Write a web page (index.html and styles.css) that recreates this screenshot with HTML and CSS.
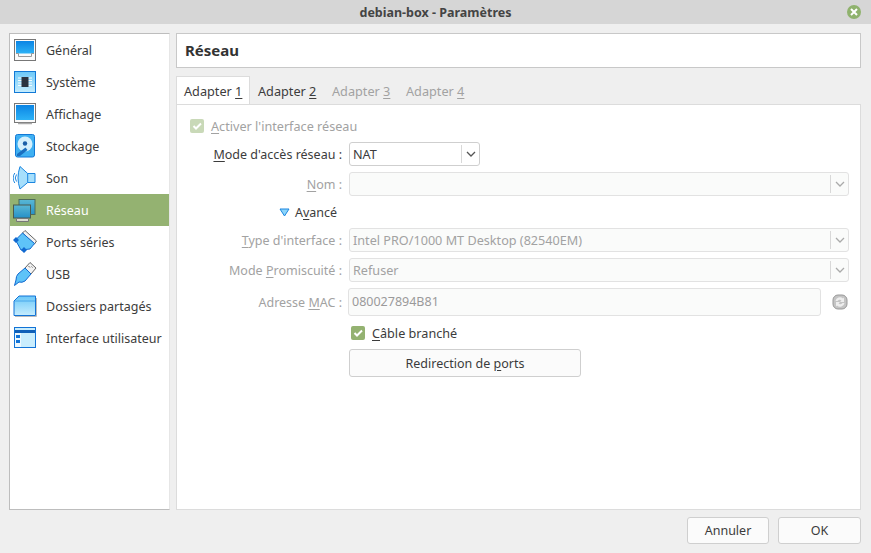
FILE: index.html
```html
<!DOCTYPE html>
<html lang="fr">
<head>
  <meta charset="UTF-8">
  <meta name="viewport" content="width=device-width, initial-scale=1.0">
  <title>debian-box - Paramètres</title>
  <link rel="stylesheet" href="styles.css">
</head>
<body>

  <!-- shared gradients for the sidebar icons -->
  <svg class="defs" width="0" height="0">
    <defs>
      <linearGradient id="screen" x1="0" y1="0" x2="0" y2="1"><stop offset="0" stop-color="#0a84e4"/><stop offset="1" stop-color="#2cb2f6"/></linearGradient>
      <linearGradient id="pale" x1="0" y1="0" x2="0" y2="1"><stop offset="0" stop-color="#6cc8f8"/><stop offset="1" stop-color="#c6edfe"/></linearGradient>
      <linearGradient id="teal" x1="0" y1="0" x2="0" y2="1"><stop offset="0" stop-color="#5ab8d4"/><stop offset="1" stop-color="#2590c8"/></linearGradient>
    </defs>
  </svg>

  <header class="titlebar">
    <span class="title">debian-box - Paramètres</span>
    <span class="close">
      <svg width="10" height="10" viewBox="0 0 10 10"><path d="M2 2l6 6M8 2l-6 6" stroke="#fff" stroke-width="2" fill="none"/></svg>
    </span>
  </header>

  <div class="main">
    <ul class="sidebar">
      <li class="item">
        <svg class="icon" viewBox="0 0 24 24"><rect x="1.500" y="1.500" width="21" height="21" fill="#fafafa" stroke="#777"/><rect x="3" y="3" width="18" height="12.500" fill="url(#screen)"/><path d="M3 15.500h2.500v3h13v-3H21" fill="none" stroke="#999"/></svg>
        <span>Général</span>
      </li>
      <li class="item">
        <svg class="icon" viewBox="0 0 24 24"><rect x="1.500" y="1.500" width="21" height="21" fill="url(#pale)" stroke="#1279d6"/><path d="M5 8h14M5 10.500h14M5 13h14M5 15.500h14" stroke="#f2fbff"/><rect x="8.500" y="7" width="7" height="10" fill="#2c3440"/></svg>
        <span>Système</span>
      </li>
      <li class="item">
        <svg class="icon" viewBox="0 0 24 24"><rect x="1.500" y="1.500" width="21" height="19" fill="#fafafa" stroke="#777"/><rect x="3" y="3" width="18" height="15" fill="url(#screen)"/><path d="M5 21.500h14" stroke="#aaa" stroke-width="1.500"/></svg>
        <span>Affichage</span>
      </li>
      <li class="item">
        <svg class="icon" viewBox="0 0 24 24"><rect x="2.500" y="0.500" width="19" height="22.500" rx="2" fill="#3fb0f2" stroke="#1279d6"/><circle cx="12" cy="10" r="7.500" fill="#d4f0fd"/><circle cx="12" cy="9.500" r="2.200" fill="#1a5fa8"/><path d="M4 20l8.500-6.500 2 2.500-7.500 6H4z" fill="#1a6fc0"/></svg>
        <span>Stockage</span>
      </li>
      <li class="item">
        <svg class="icon" viewBox="0 0 24 24"><path d="M7 0.500l7.700 7h7.300v9h-7.300L7 23Q3 12 7 0.500z" fill="#a6dffc" stroke="#1b86e0" stroke-linejoin="round"/><path d="M14.700 7.500v9" stroke="#1b86e0"/><path d="M3.500 8.500a6 6 0 0 0 0 7M1.800 7a9 9 0 0 0 0 10" fill="none" stroke="#1b86e0"/></svg>
        <span>Son</span>
      </li>
      <li class="item selected">
        <svg class="icon" viewBox="0 0 24 24"><rect x="6" y="1.500" width="16" height="15" fill="url(#teal)" stroke="#4f6b5a"/><rect x="0.500" y="7" width="17" height="13" fill="url(#teal)" stroke="#4a5a50"/><path d="M3.500 20.500h12v3h-12z" fill="#dcdcd0" stroke="#777"/></svg>
        <span>Réseau</span>
      </li>
      <li class="item">
        <svg class="icon" viewBox="0 0 24 24"><path d="M12 0.500L23.500 11l-2 3L9.500 3z" fill="#f2f2f2" stroke="#666"/><path d="M9.500 3l12 10.500L17 19l-9 1-5.500-10z" fill="#5ec3f8" stroke="#1169d0"/><path d="M0 10l3-3 3 3-3 3zM8 20l3-3 3 3-3 3z" fill="#1169d0"/></svg>
        <span>Ports séries</span>
      </li>
      <li class="item">
        <svg class="icon" viewBox="0 0 24 24"><path d="M12 6l5-5.500L23 6l-5 6z" fill="#f2f2f2" stroke="#666"/><path d="M15.500 4l1.500 1.500M18.500 4.500l1 1" stroke="#666"/><path d="M12 6l6 6-6 7q-3 2-6 1l-4.500 3.500L3 18q0-4 2-6z" fill="#5ec3f8" stroke="#1169d0" stroke-linejoin="round"/></svg>
        <span>USB</span>
      </li>
      <li class="item">
        <svg class="icon" viewBox="0 0 24 24"><path d="M2 22.500h21.500V4" fill="none" stroke="#bbb"/><path d="M1 21.500V7l5-5h16.500v19.500z" fill="url(#pale)" stroke="#1273d6"/><path d="M2 7h20" stroke="#4aa8ea"/></svg>
        <span>Dossiers partagés</span>
      </li>
      <li class="item">
        <svg class="icon" viewBox="0 0 24 24"><rect x="1.500" y="1.500" width="21" height="20" fill="#c9edfd" stroke="#1273d6"/><path d="M2 4h20v3H2z" fill="#1060b8"/><path d="M2 7h6v14H2z" fill="#eef9ff"/><path d="M3 9h4v3H3zM3 14h4v3H3z" fill="#1273d6"/></svg>
        <span>Interface utilisateur</span>
      </li>
    </ul>

    <div class="content">
      <h1 class="page-title">Réseau</h1>

      <div class="tabs">
        <span class="tab active">Adapter <u>1</u></span>
        <span class="tab">Adapter <u>2</u></span>
        <span class="tab muted">Adapter <u>3</u></span>
        <span class="tab muted">Adapter <u>4</u></span>
      </div>

      <div class="pane">
        <label class="check muted row-enable">
          <span class="box off"><svg width="10" height="10" viewBox="0 0 10 10"><path d="M1.500 5l2.500 2.500 5-5" stroke="#fff" stroke-width="2" fill="none"/></svg></span>
          <span><u>A</u>ctiver l'interface réseau</span>
        </label>

        <div class="form">
          <span class="label"><u>M</u>ode d'accès réseau :</span>
          <div class="combo short">
            <span>NAT</span>
            <span class="arrow"><svg width="10" height="6" viewBox="0 0 10 6"><path d="M1 1l4 4 4-4" stroke="#555" stroke-width="1.300" fill="none"/></svg></span>
          </div>

          <span class="label muted"><u>N</u>om :</span>
          <div class="combo disabled">
            <span></span>
            <span class="arrow"><svg width="10" height="6" viewBox="0 0 10 6"><path d="M1 1l4 4 4-4" stroke="#aaa" stroke-width="1.300" fill="none"/></svg></span>
          </div>

          <span></span>
          <div class="advanced">
            <svg width="11" height="9" viewBox="0 0 11 9"><path d="M1 1h9L5.500 8z" fill="#8cd5fa" stroke="#1b86e0"/></svg>
            <span>A<u>v</u>ancé</span>
          </div>

          <span class="label muted"><u>T</u>ype d'interface :</span>
          <div class="combo disabled">
            <span>Intel PRO/1000 MT Desktop (82540EM)</span>
            <span class="arrow"><svg width="10" height="6" viewBox="0 0 10 6"><path d="M1 1l4 4 4-4" stroke="#aaa" stroke-width="1.300" fill="none"/></svg></span>
          </div>

          <span class="label muted">Mode <u>P</u>romiscuité :</span>
          <div class="combo disabled">
            <span>Refuser</span>
            <span class="arrow"><svg width="10" height="6" viewBox="0 0 10 6"><path d="M1 1l4 4 4-4" stroke="#aaa" stroke-width="1.300" fill="none"/></svg></span>
          </div>

          <span class="label muted">Adresse <u>M</u>AC :</span>
          <div class="mac-row">
            <div class="input">080027894B81</div>
            <svg width="16" height="16" viewBox="0 0 16 16"><rect x="1" y="1" width="14" height="14" rx="5" fill="#c4c4c4" stroke="#999"/><path d="M3.500 7a4.500 4.500 0 0 1 7.500-2.500l1-1V8H8l1.500-1.500a2.500 2.500 0 0 0-4 .5zM12.500 9a4.500 4.500 0 0 1-7.500 2.500l-1 1V8h4l-1.500 1.500a2.500 2.500 0 0 0 4-.5z" fill="#eee"/></svg>
          </div>

          <span></span>
          <label class="check cable">
            <span class="box on"><svg width="10" height="10" viewBox="0 0 10 10"><path d="M1.500 5l2.500 2.500 5-5" stroke="#fff" stroke-width="2" fill="none"/></svg></span>
            <span><u>C</u>âble branché</span>
          </label>

          <span></span>
          <button class="btn ports">Redirection de <u>p</u>orts</button>
        </div>
      </div>
    </div>
  </div>

  <footer class="actions">
    <button class="btn cancel">Annuler</button>
    <button class="btn ok">OK</button>
  </footer>

</body>
</html>
```

FILE: styles.css
```css
* {
  box-sizing: border-box;
}

html, body {
  height: 100%;
}

body {
  display: flex;
  flex-direction: column;
  margin: 0;
  background-color: #efefef;
  color: #3c3c3c;
  font-family: "Noto Sans", "Open Sans", sans-serif;
  font-size: 12.5px;
}

u {
  text-underline-offset: 2px;
}

.defs {
  position: absolute;
}

.titlebar {
  display: flex;
  align-items: center;
  justify-content: center;
  position: relative;
  flex: none;
  height: 24px;
  background-color: #d6d6d6;
}

.title {
  font-weight: 700;
  font-size: 12.5px;
  color: #444;
}

.close {
  position: absolute;
  right: 10px;
  top: 5px;
  display: flex;
  align-items: center;
  justify-content: center;
  width: 14px;
  height: 14px;
  border-radius: 50%;
  background-color: #8fb26d;
}

.main {
  display: flex;
  gap: 6px;
  flex: none;
  height: 486px;
  padding: 9px 10px 0 9px;
}

.sidebar {
  width: 161px;
  margin: 0;
  padding: 0;
  list-style: none;
  background-color: #fff;
  border: 1px solid #bdbdbd;
  border-right-color: #e6e6e6;
}

.item {
  display: flex;
  align-items: center;
  gap: 9px;
  height: 32px;
  padding-left: 3px;
}

.item.selected {
  background-color: #94b271;
  color: #fff;
}

.icon {
  width: 24px;
  height: 24px;
  flex: none;
}

.content {
  display: flex;
  flex-direction: column;
  flex: 1;
}

.page-title {
  height: 35px;
  margin: 0;
  padding-left: 8px;
  background-color: #fff;
  border: 1px solid #c8c8c8;
  color: #333;
  font-size: 15px;
  font-weight: 700;
  line-height: 33px;
}

.tabs {
  display: flex;
  height: 36px;
  padding-top: 8px;
}

.tab {
  width: 74px;
  padding: 1px 0 0 8px;
  font-size: 12.700px;
  line-height: 28px;
  white-space: pre;
}

.tab.active {
  width: 74px;
  height: 29px;
  padding: 0 0 0 7px;
  background-color: #fff;
  border: 1px solid #dcdcdc;
  border-bottom: 0;
  line-height: 28px;
}

.muted {
  color: #a2a2a2;
}

.pane {
  flex: 1;
  padding: 11px 11px 0 13px;
  background-color: #fff;
  border: 1px solid #dcdcdc;
}

.check {
  display: flex;
  align-items: center;
  gap: 7px;
  font-size: 12.650px;
}

.row-enable {
  height: 20px;
}

.box {
  display: flex;
  align-items: center;
  justify-content: center;
  width: 14px;
  height: 14px;
  border-radius: 2px;
}

.box.on {
  background-color: #94b271;
}

.box.off {
  background-color: #c9d9b8;
}

.form {
  display: grid;
  grid-template-columns: 152px 1fr;
  grid-template-rows: 24px 24px 20px 24px 24px 28px 21px 28px;
  column-gap: 7px;
  row-gap: 6px;
  margin-top: 6px;
}

.label {
  align-self: center;
  text-align: right;
}

.combo {
  display: flex;
  align-items: center;
  justify-content: space-between;
  padding-left: 3px;
  background-color: #fff;
  border: 1px solid #cfcfcf;
  border-radius: 3px;
  font-size: 12.650px;
}

.combo.short {
  width: 131px;
}

.combo.disabled {
  background-color: #fafbfa;
  border-color: #e2e2e2;
  color: #a2a2a2;
}

.arrow {
  display: flex;
  align-items: center;
  justify-content: center;
  width: 18px;
  height: 18px;
  border-left: 1px solid #d8d8d8;
}

.advanced {
  display: flex;
  align-items: center;
  gap: 5px;
  margin-left: -70px;
}

.mac-row {
  display: flex;
  align-items: center;
  gap: 11px;
  margin-left: -1px;
  margin-right: 1px;
}

.input {
  flex: 1;
  height: 28px;
  padding-left: 3px;
  background-color: #fafbfa;
  border: 1px solid #e2e2e2;
  border-radius: 3px;
  color: #9a9a9a;
  line-height: 26px;
}

.cable {
  padding: 1px 0 0 2px;
  color: #3c3c3c;
}

.btn {
  height: 27px;
  padding: 0;
  background-color: #fbfbfb;
  border: 1px solid #cfcfcf;
  border-radius: 3px;
  color: #3c3c3c;
  font: inherit;
}

.ports {
  width: 232px;
  height: 28px;
}

.actions {
  display: flex;
  justify-content: flex-end;
  gap: 9px;
  padding: 7px 10px 0 0;
}

.cancel {
  width: 82px;
}

.ok {
  width: 83px;
}
```
